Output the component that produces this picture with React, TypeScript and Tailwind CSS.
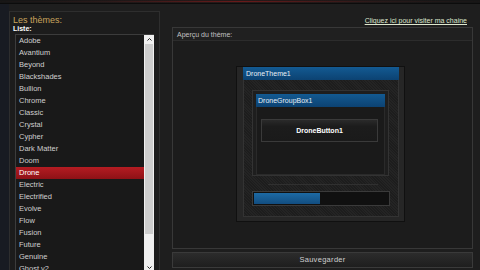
import React from "react";

const themes = [
  "Adobe",
  "Avantium",
  "Beyond",
  "Blackshades",
  "Bullion",
  "Chrome",
  "Classic",
  "Crystal",
  "Cypher",
  "Dark Matter",
  "Doom",
  "Drone",
  "Electric",
  "Electrified",
  "Evolve",
  "Flow",
  "Fusion",
  "Future",
  "Genuine",
  "Ghost v2",
];

const font = { fontFamily: '"Liberation Sans", Arial, sans-serif' };

export default function App() {
  return (
    <div
      className="w-[480px] h-[270px] overflow-hidden bg-[#1e1e1e] flex flex-col text-[#d0d0d0]"
      style={font}
    >
      {/* top strip with red glow */}
      <div className="h-[4px] shrink-0 bg-[radial-gradient(ellipse_at_center,#6a1a1a_0%,#2a1a1a_40%,#161616_75%)] border-b border-[#0c0c0c]" />

      <div className="flex flex-1 min-h-0">
        {/* left edge */}
        <div className="w-[9px] shrink-0 bg-[#181b22]" />

        {/* theme list panel */}
        <div className="w-[151px] shrink-0 mt-[7px] border border-[#2e2e2e] border-b-0 bg-[#1c1c1c] flex flex-col pl-[2px]">
          <div className="text-[9px] leading-[10px] text-[#c9a45c] pt-[3px] pl-[1px]">
            Les thèmes:
          </div>
          <div className="text-[7px] leading-[8px] font-bold text-white pl-[1px]">
            Liste:
          </div>
          <div className="mt-[1px] ml-[3px] w-[139px] flex-1 border-t border-l border-[#3c3c3c] bg-[#191919] flex">
            <div className="flex-1 flex flex-col">
              {themes.map((t) => (
                <div
                  key={t}
                  className={
                    t === "Drone"
                      ? "h-[12px] shrink-0 leading-[12px] text-[7.5px] pl-[3px] text-white bg-[linear-gradient(#b51c22,#8e1116)]"
                      : "h-[12px] shrink-0 leading-[12px] text-[7.5px] pl-[3px] text-[#cfcfcf]"
                  }
                >
                  {t}
                </div>
              ))}
            </div>
            <div className="w-[10px] bg-[#f0f0f0] flex flex-col">
              <div className="h-[9px] flex items-center justify-center">
                <svg width="5" height="3" viewBox="0 0 5 3">
                  <path d="M0.5 2.5 L2.5 0.5 L4.5 2.5" stroke="#222" fill="none" strokeWidth="1" />
                </svg>
              </div>
              <div className="h-[190px] mx-[1px] bg-[#cdcdcd]" />
              <div className="flex-1" />
              <div className="h-[9px] mb-[3px] flex items-center justify-center">
                <svg width="5" height="3" viewBox="0 0 5 3">
                  <path d="M0.5 0.5 L2.5 2.5 L4.5 0.5" stroke="#222" fill="none" strokeWidth="1" />
                </svg>
              </div>
            </div>
          </div>
        </div>

        {/* right side */}
        <div className="flex-1 flex flex-col pl-[12px] pr-[7px]">
          <div className="h-[23px] flex items-end justify-end pr-[6px] pb-[2px]">
            <span className="text-[7px] leading-[9px] underline text-[#dfe8cf]">
              Cliquez ici pour visiter ma chaine
            </span>
          </div>

          {/* preview panel */}
          <div className="h-[222px] border border-[#383838] bg-[#1c1c1c] flex flex-col">
            <div className="h-[13px] border-b border-[#2c2c2c] bg-[#202020] text-[7px] leading-[13px] pl-[4px] text-[#c0c0c0]">
              Aperçu du thème:
            </div>
            <div className="flex-1 pl-[63px] pt-[25px]">
              {/* DroneTheme1 window */}
              <div className="w-[169px] h-[156px] border border-[#101010] bg-[#262626] flex flex-col pl-[6px] pr-[5px]">
                <div className="h-[13px] shrink-0 bg-[linear-gradient(#135a92,#0c4272)] text-[7px] leading-[13px] pl-[3px] text-[#e8eef5]">
                  DroneTheme1
                </div>
                <div className="flex-1 mb-[4px] border-x border-b border-[#333] bg-[repeating-linear-gradient(45deg,#1d1d1d_0px,#1d1d1d_1px,#242424_1px,#242424_2px)] pl-[8px] pt-[10px]">
                  {/* group box */}
                  <div className="w-[137px] h-[86px] border border-[#333] bg-[#1e1e1e] p-[3px] pb-0 flex flex-col">
                    <div className="h-[13px] bg-[linear-gradient(#135a92,#0c4272)] text-[7px] leading-[13px] pl-[2px] text-[#e8eef5]">
                      DroneGroupBox1
                    </div>
                    <div className="flex-1 border-x border-b border-[#2a2a2a] bg-[#1a1a1a] pl-[4px] pt-[12px]">
                      <div className="w-[117px] h-[23px] border border-[#3a3a3a] bg-[linear-gradient(#2a2a2a,#1c1c1c_30%,#1a1a1a)] text-[7px] leading-[21px] font-bold text-white text-center">
                        DroneButton1
                      </div>
                    </div>
                  </div>
                  <div className="ml-[16px] mt-[8px] w-[110px] h-px bg-[#303030]" />
                  {/* progress bar */}
                  <div className="mt-[6px] w-[138px] h-[15px] border border-[#3a3a3a] bg-[#101010] p-[1px] flex">
                    <div className="w-[66px] bg-[linear-gradient(#1d6aa4,#124d80)]" />
                  </div>
                </div>
              </div>
            </div>
          </div>

          {/* save button */}
          <div className="mt-[3px] h-[16px] border border-[#3a3a3a] bg-[linear-gradient(#2c2c2c,#1e1e1e)] text-[7.5px] leading-[14px] text-center text-[#cfcfcf] tracking-[0.3px]">
            Sauvegarder
          </div>
        </div>
      </div>
    </div>
  );
}
